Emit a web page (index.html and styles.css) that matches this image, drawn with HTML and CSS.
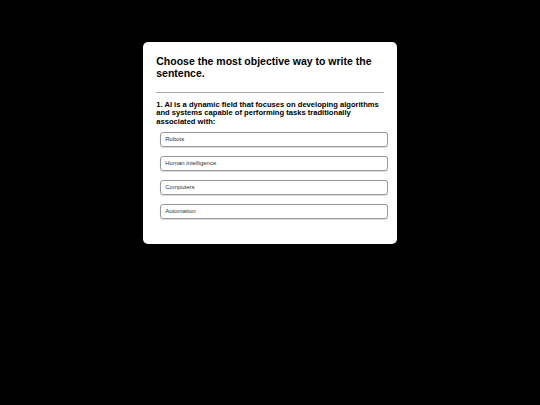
FILE: index.html
```html
<!DOCTYPE html>
<html>
<head>
<meta charset="utf-8">
<link rel="stylesheet" href="styles.css">
</head>
<body>
<div class="card">
  <h1 class="title">Choose the most objective way to write the sentence.</h1>
  <hr class="divider">
  <p class="question">1. AI is a dynamic field that focuses on developing algorithms and systems capable of performing tasks traditionally associated with:</p>
  <div class="options">
    <div class="option">Robots</div>
    <div class="option">Human intelligence</div>
    <div class="option">Computers</div>
    <div class="option">Automation</div>
  </div>
</div>
</body>
</html>
```
FILE: styles.css
```css
html, body {
  margin: 0;
  padding: 0;
  background: #000;
}
body {
  width: 540px;
  height: 405px;
  font-family: "Liberation Sans", Arial, sans-serif;
}
.card {
  box-sizing: border-box;
  width: 253.5px;
  margin: 42px auto 0;
  padding: 13px 13px 13px;
  background: #fff;
  border-radius: 5px;
}
.title {
  margin: 0;
  font-size: 10.5px;
  line-height: 12.3px;
  font-weight: bold;
  color: #000;
}
.divider {
  height: 0;
  margin: 12px 0 8px;
  border: none;
  border-top: 1px solid #a8a8a8;
}
.question {
  margin: 0 0 5.6px;
  font-size: 7.6px;
  line-height: 8.6px;
  font-weight: bold;
  color: #000;
}
.options {
  display: flex;
  flex-direction: column;
  gap: 9px;
  margin: 0 -4px 12.5px 4px;
}
.option {
  box-sizing: border-box;
  height: 15px;
  padding: 0 4px;
  border: 1px solid #9a9a9a;
  border-radius: 3px;
  box-shadow: 0 0.5px 1px rgba(0,0,0,0.15);
  font-size: 6px;
  line-height: 13px;
  color: #333;
}
```
